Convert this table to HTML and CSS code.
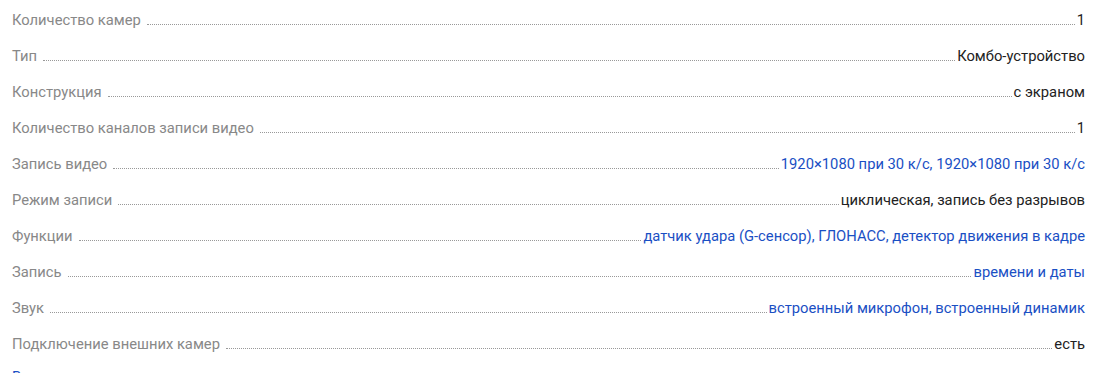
FILE: index.html
```html
<!DOCTYPE html>
<html lang="ru">
<head>
<meta charset="utf-8">
<link rel="stylesheet" href="styles.css">
</head>
<body>
<div class="specs">
  <div class="row"><span class="label">Количество камер</span><span class="dots"></span><span class="value">1</span></div>
  <div class="row"><span class="label">Тип</span><span class="dots"></span><span class="value">Комбо-устройство</span></div>
  <div class="row"><span class="label">Конструкция</span><span class="dots"></span><span class="value">с экраном</span></div>
  <div class="row"><span class="label">Количество каналов записи видео</span><span class="dots"></span><span class="value">1</span></div>
  <div class="row"><span class="label">Запись видео</span><span class="dots"></span><span class="value link">1920×1080 при 30 к/с, 1920×1080 при 30 к/с</span></div>
  <div class="row"><span class="label">Режим записи</span><span class="dots"></span><span class="value">циклическая, запись без разрывов</span></div>
  <div class="row"><span class="label">Функции</span><span class="dots"></span><span class="value link">датчик удара (G-сенсор), ГЛОНАСС, детектор движения в кадре</span></div>
  <div class="row"><span class="label">Запись</span><span class="dots"></span><span class="value link">времени и даты</span></div>
  <div class="row"><span class="label">Звук</span><span class="dots"></span><span class="value link">встроенный микрофон, встроенный динамик</span></div>
  <div class="row"><span class="label">Подключение внешних камер</span><span class="dots"></span><span class="value">есть</span></div>
  <div class="more"><a class="more-link" href="#">Все характеристики</a></div>
</div>
</body>
</html>
```

FILE: styles.css
```css
html, body {
  margin: 0;
  padding: 0;
  background: #fff;
}
body {
  font-family: Roboto, "Noto Sans", sans-serif;
  font-size: 14.75px;
  line-height: 18px;
  color: #222;
}
.specs {
  display: flex;
  flex-direction: column;
  padding: 11px 15px 0 12px;
}
.row {
  display: flex;
  align-items: baseline;
  height: 36px;
}
.label {
  color: #888;
  white-space: nowrap;
}
.dots {
  flex: 1;
  border-bottom: 1px dotted #999;
  margin: 0 2px 0 6px;
}
.value {
  white-space: nowrap;
  color: #222;
}
.value.link {
  color: #1a4fc4;
}
.more {
  margin-top: -3px;
}
.more-link {
  color: #1a4fc4;
  text-decoration: none;
}
```
